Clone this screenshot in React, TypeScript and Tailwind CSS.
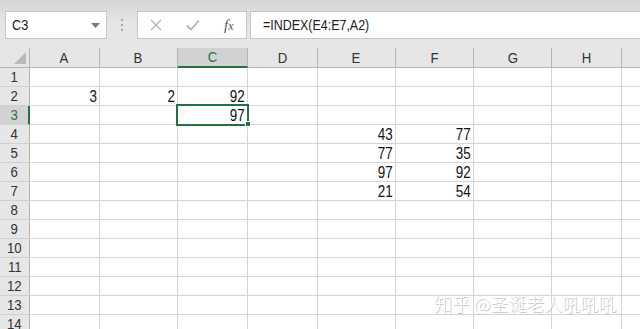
import React from "react";

const COLS = ["A", "B", "C", "D", "E", "F", "G", "H", "I"];
const WIDTHS = [70, 78, 70, 70, 78, 78, 78, 70, 40];

const data: Record<string, string> = {
  A2: "3",
  B2: "2",
  C2: "92",
  C3: "97",
  E4: "43",
  F4: "77",
  E5: "77",
  F5: "35",
  E6: "97",
  F6: "92",
  E7: "21",
  F7: "54",
};

const cellFont = { fontFamily: '"Liberation Sans",Arial,sans-serif' };

export default function App() {
  const rows = Array.from({ length: 14 }, (_, i) => i + 1);
  const gridCols = "30px " + WIDTHS.map((w) => w + "px").join(" ");
  return (
    <div className="w-[640px] h-[329px] overflow-hidden bg-white relative" style={cellFont}>
      {/* toolbar */}
      <div className="h-[48px] bg-gradient-to-b from-[#d6d6d6] via-[#e6e6e6] to-[#e6e6e6] flex items-start pt-[11px]">
        <div className="ml-[5px] w-[102px] h-[28px] bg-white border border-[#c6c6c6] flex items-center justify-between pl-[6px] pr-[6px]">
          <span className="inline-block text-[15px] text-[#222] scale-x-[0.85] origin-left">C3</span>
          <svg width="9" height="5" viewBox="0 0 9 5">
            <path d="M0 0 L9 0 L4.5 5 Z" fill="#7a7a7a" />
          </svg>
        </div>
        <div className="ml-[14px] mt-[8px] flex flex-col gap-[3px]">
          <div className="w-[2px] h-[2px] bg-[#a8a8a8]" />
          <div className="w-[2px] h-[2px] bg-[#a8a8a8]" />
          <div className="w-[2px] h-[2px] bg-[#a8a8a8]" />
        </div>
        <div className="ml-[14px] w-[110px] h-[28px] bg-white border border-[#c6c6c6] flex items-center">
          <svg className="ml-[12px]" width="12" height="12" viewBox="0 0 12 12">
            <path d="M1 1 L11 11 M11 1 L1 11" stroke="#b4b4b4" strokeWidth="1.4" />
          </svg>
          <svg className="ml-[24px]" width="14" height="12" viewBox="0 0 14 12">
            <path d="M1 6.5 L5 10.5 L13 1.5" stroke="#b4b4b4" strokeWidth="1.8" fill="none" />
          </svg>
          <span
            className="ml-[24px] text-[15px] italic text-[#555]"
            style={{ fontFamily: '"Liberation Serif","Times New Roman",serif' }}
          >
            f<span className="text-[12px]">x</span>
          </span>
        </div>
        <div className="ml-[3px] flex-1 h-[28px] bg-white border border-[#c6c6c6] border-r-0 flex items-center pl-[12px]">
          <span className="inline-block text-[15px] text-[#222] scale-x-[0.83] origin-left whitespace-nowrap">
            =INDEX(E4:E7,A2)
          </span>
        </div>
      </div>

      {/* sheet */}
      <div className="relative">
        <div className="grid" style={{ gridTemplateColumns: gridCols }}>
          {/* header row */}
          <div className="h-[20px] bg-[#e6e6e6] border-r border-b border-[#b4b4b4] relative">
            <svg className="absolute left-[14px] top-[4px]" width="12" height="12" viewBox="0 0 12 12">
              <path d="M12 0 L12 12 L0 12 Z" fill="#b9b9b9" />
            </svg>
          </div>
          {COLS.map((c) => {
            const sel = c === "C";
            return (
              <div
                key={c}
                className={
                  sel
                    ? "h-[20px] bg-[#d2d2d2] border-r border-[#b4b4b4] border-b-2 border-b-[#217346] flex items-center justify-center text-[15px] text-[#217346] pt-[1px]"
                    : "h-[20px] bg-[#e6e6e6] border-r border-b border-[#b4b4b4] flex items-center justify-center text-[15px] text-[#333] pt-[1px]"
                }
              >
                <span className="inline-block scale-x-[0.88]">{c}</span>
              </div>
            );
          })}
          {rows.map((r) => (
            <React.Fragment key={r}>
              <div
                className={
                  r === 3
                    ? "h-[19px] bg-[#d2d2d2] border-b border-[#d0d0d0] border-r-2 border-r-[#217346] flex items-center justify-center text-[15px] text-[#217346] pl-[1px]"
                    : "h-[19px] bg-[#e6e6e6] border-b border-[#d0d0d0] border-r border-r-[#b4b4b4] flex items-center justify-center text-[15px] text-[#333]"
                }
              >
                <span className="inline-block scale-x-[0.88]">{r}</span>
              </div>
              {COLS.map((c) => (
                <div
                  key={c}
                  className="h-[19px] border-r border-b border-[#d4d4d4] flex items-end justify-end pr-[2px] text-[16px] leading-[17px] text-[#111]"
                >
                  {data[c + r] ? (
                    <span className="inline-block scale-x-[0.84] origin-right">{data[c + r]}</span>
                  ) : null}
                </div>
              ))}
            </React.Fragment>
          ))}
        </div>

        {/* selection */}
        <div className="absolute left-[176px] top-[56px] w-[73px] h-[22px] border-2 border-[#217346]" />
        <div className="absolute left-[245px] top-[73px] w-[6px] h-[6px] bg-[#217346] border border-white" />
      </div>

      {/* watermark */}
      <div
        className="absolute left-[434px] top-[290px] text-[18px] text-white whitespace-nowrap font-light"
        style={{
          fontFamily: '"Noto Sans CJK SC",sans-serif',
          textShadow: "1px 1px 0 #c4c4c4",
        }}
      >
        知乎 @圣诞老人吼吼吼
      </div>
    </div>
  );
}
